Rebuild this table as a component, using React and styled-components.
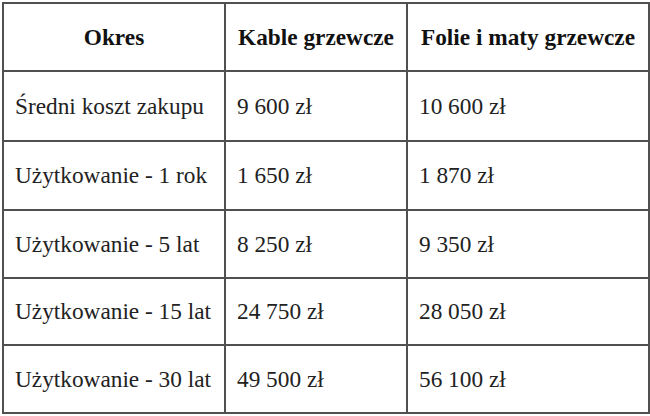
import React from "react";
import styled, { createGlobalStyle } from "styled-components";

const Global = createGlobalStyle`
  html, body { margin: 0; padding: 0; background: #fff; }
  body { font-family: "Liberation Serif", "Times New Roman", serif; }
`;

const Wrap = styled.div`
  padding: 2px 0 0 2px;
  width: 650px;
  height: 416px;
  box-sizing: border-box;
`;

const Table = styled.table`
  border-collapse: collapse;
  table-layout: fixed;
  width: 646px;
  color: #1e1e1e;
  font-family: "Liberation Serif", "Times New Roman", serif;
`;

const Col = styled.col`
  width: ${(p) => p.$w}px;
`;

const Row = styled.tr`
  height: ${(p) => p.$h}px;
`;

const Th = styled.th`
  border: 2px solid #505050;
  font-family: "Liberation Serif", "Times New Roman", serif;
  font-size: 23.3px;
  font-weight: bold;
  text-align: center;
  vertical-align: middle;
  color: #111;
  padding: 0;
  white-space: nowrap;
`;

const Td = styled.td`
  border: 2px solid #505050;
  font-family: "Liberation Serif", "Times New Roman", serif;
  font-size: 23.3px;
  color: #222;
  text-align: left;
  vertical-align: middle;
  padding: 0 0 0 11px;
  white-space: nowrap;
`;

const rows = [
  ["Średni koszt zakupu", "9 600 zł", "10 600 zł", 70],
  ["Użytkowanie - 1 rok", "1 650 zł", "1 870 zł", 69],
  ["Użytkowanie - 5 lat", "8 250 zł", "9 350 zł", 68],
  ["Użytkowanie - 15 lat", "24 750 zł", "28 050 zł", 67],
  ["Użytkowanie - 30 lat", "49 500 zł", "56 100 zł", 68],
];

export default function App() {
  return (
    <>
      <Global />
      <Wrap>
        <Table>
          <colgroup>
            <Col $w={222} />
            <Col $w={182} />
            <Col $w={242} />
          </colgroup>
          <thead>
            <Row $h={68}>
              <Th>Okres</Th>
              <Th>Kable grzewcze</Th>
              <Th>Folie i maty grzewcze</Th>
            </Row>
          </thead>
          <tbody>
            {rows.map(([a, b, c, h]) => (
              <Row key={a} $h={h}>
                <Td>{a}</Td>
                <Td>{b}</Td>
                <Td>{c}</Td>
              </Row>
            ))}
          </tbody>
        </Table>
      </Wrap>
    </>
  );
}
